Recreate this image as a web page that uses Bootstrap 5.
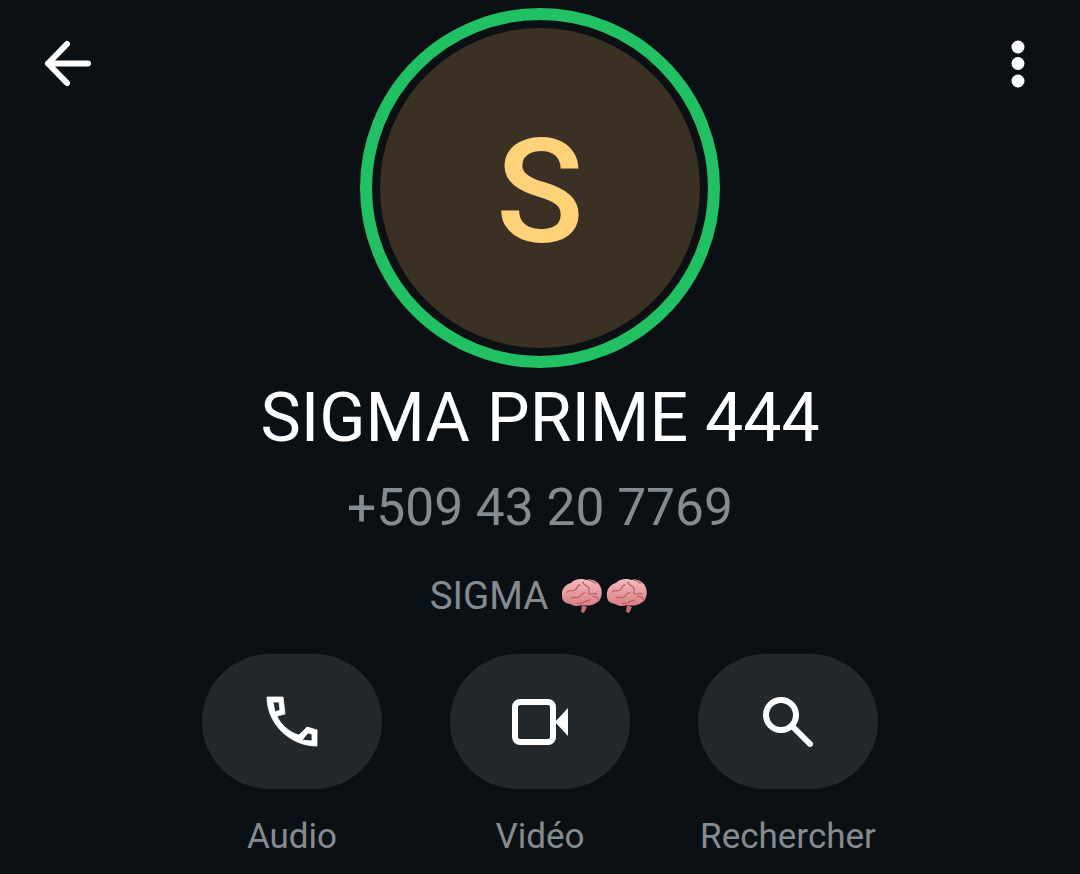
<!DOCTYPE html>
<html lang="fr">
<head>
  <meta charset="UTF-8">
  <title>SIGMA PRIME 444</title>
  <link href="https://cdn.jsdelivr.net/npm/bootstrap@5.3.3/dist/css/bootstrap.min.css" rel="stylesheet">
  <style>
    html, body { height: 100%; }
    body { background: #0b1014; font-family: Roboto, "Liberation Sans", sans-serif; overflow: hidden; }
    .profile-page { width: 1080px; height: 874px; padding-top: 8px; }
    .top-row { padding: 0 44px 0 44px; }
    .top-icon { width: 48px; height: 48px; margin-top: 32px; padding: 0; background: none; border: 0; }
    .avatar-ring { width: 360px; height: 360px; border: 12px solid #21c063; padding: 8px; border-radius: 50%; }
    .avatar-fill { width: 100%; height: 100%; border-radius: 50%; background: #3b3024; color: #ffd279; font-size: 145px; font-weight: 500; line-height: 1; padding-top: 8px; }
    .contact-name { color: #fff; font-size: 68px; font-weight: 400; line-height: 78px; margin: 11px 0 0; }
    .contact-phone { color: #858c91; font-size: 51.500px; line-height: 56px; margin-top: 23px; }
    .contact-about { color: #858c91; font-size: 38.500px; line-height: 42px; margin-top: 39px; }
    .brain-pair { margin-left: 12px; }
    .actions-row { gap: 68px; margin-top: 37px; }
    .action-item { width: 180px; }
    .action-btn { width: 180px; height: 135px; border-radius: 68px; background: #23282c; border: 0; }
    .action-label { color: #858c91; font-size: 35px; line-height: 38px; margin-top: 29px; white-space: nowrap; }
  </style>
</head>
<body>
  <div class="profile-page d-flex flex-column align-items-center">
    <div class="top-row w-100 d-flex justify-content-between align-items-start">
      <button class="top-icon d-flex align-items-center justify-content-center">
        <svg width="48" height="48" viewBox="0 0 48 48" fill="none" stroke="#fff" stroke-width="6" stroke-linecap="round" stroke-linejoin="round"><path d="M23 4 L4 23.500 L23 43 M4 23.500 H44"/></svg>
      </button>
      <div class="avatar-ring">
        <div class="avatar-fill d-flex align-items-center justify-content-center">S</div>
      </div>
      <button class="top-icon d-flex align-items-center justify-content-center">
        <svg width="48" height="48" viewBox="0 0 48 48" fill="#fff"><circle cx="30" cy="7" r="6.500"/><circle cx="30" cy="23.500" r="6.500"/><circle cx="30" cy="41" r="6.500"/></svg>
      </button>
    </div>

    <h1 class="contact-name">SIGMA PRIME 444</h1>
    <div class="contact-phone">+509 43 20 7769</div>
    <div class="contact-about d-flex align-items-center">
      <span>SIGMA</span>
      <svg class="brain-pair" width="90" height="36" viewBox="0 0 90 36">
        <defs>
          <linearGradient id="brainFill" x1="0" y1="0" x2="0" y2="1"><stop offset="0" stop-color="#f6bcbf"/><stop offset="1" stop-color="#d87c82"/></linearGradient>
          <g id="brainShape">
            <path d="M21 27l-1 7 3 1 3-6z" fill="#c56a72"/>
            <path d="M1 18C0 11 5 6 10 5 13 1 21 0 25 2c7-2 13 2 15 8 2 6 0 13-5 15-4 3-10 3-14 2-4 2-9 1-12-1C3 25 1 22 1 18z" fill="url(#brainFill)"/>
            <path d="M6 14c3-3 5 0 8-2s1-5 5-5m-9 13c3-2 5 1 8-1s3-5 6-4m-8 11c3-1 5 0 7-2s4-1 6-2m-7-18c0 4 5 3 6 6s-2 5 1 6 4-2 7 0m-8-14c3 0 4 3 7 3m-3 13c2 1 5 1 6 4" fill="none" stroke="#b9616b" stroke-width="1.300" stroke-linecap="round"/>
          </g>
        </defs>
        <use href="#brainShape" x="1" y="0"/>
        <use href="#brainShape" x="46" y="0"/>
      </svg>
    </div>

    <div class="actions-row d-flex">
      <div class="action-item d-flex flex-column align-items-center">
        <button class="action-btn d-flex align-items-center justify-content-center">
          <svg width="54" height="54" viewBox="0 0 54 54"><path fill="#fff" fill-rule="evenodd" stroke="#fff" stroke-width="0.800" stroke-linejoin="round" d="M2 2 H18 L20 19 L12 21 C15 29 25 38 34 40 L42 32 L52 35 V51 C24 51 2 28 2 2 Z M8 7 L14 7 L15 15 L10 17 Z M37 45 L43 38 L47 39 V46 Z"/></svg>
        </button>
        <div class="action-label">Audio</div>
      </div>
      <div class="action-item d-flex flex-column align-items-center">
        <button class="action-btn d-flex align-items-center justify-content-center">
          <svg width="58" height="46" viewBox="0 0 58 46"><rect x="4" y="3" width="38" height="40" rx="5" fill="none" stroke="#fff" stroke-width="6"/><path d="M44 23 L57 9 V37 Z" fill="#fff"/></svg>
        </button>
        <div class="action-label">Vidéo</div>
      </div>
      <div class="action-item d-flex flex-column align-items-center">
        <button class="action-btn d-flex align-items-center justify-content-center">
          <svg width="50" height="50" viewBox="0 0 50 50" fill="none" stroke="#fff" stroke-width="6" stroke-linecap="round"><circle cx="18" cy="18" r="15"/><path d="M29 29 L47 47"/></svg>
        </button>
        <div class="action-label">Rechercher</div>
      </div>
    </div>
  </div>
  <script src="https://cdn.jsdelivr.net/npm/bootstrap@5.3.3/dist/js/bootstrap.bundle.min.js"></script>
</body>
</html>
